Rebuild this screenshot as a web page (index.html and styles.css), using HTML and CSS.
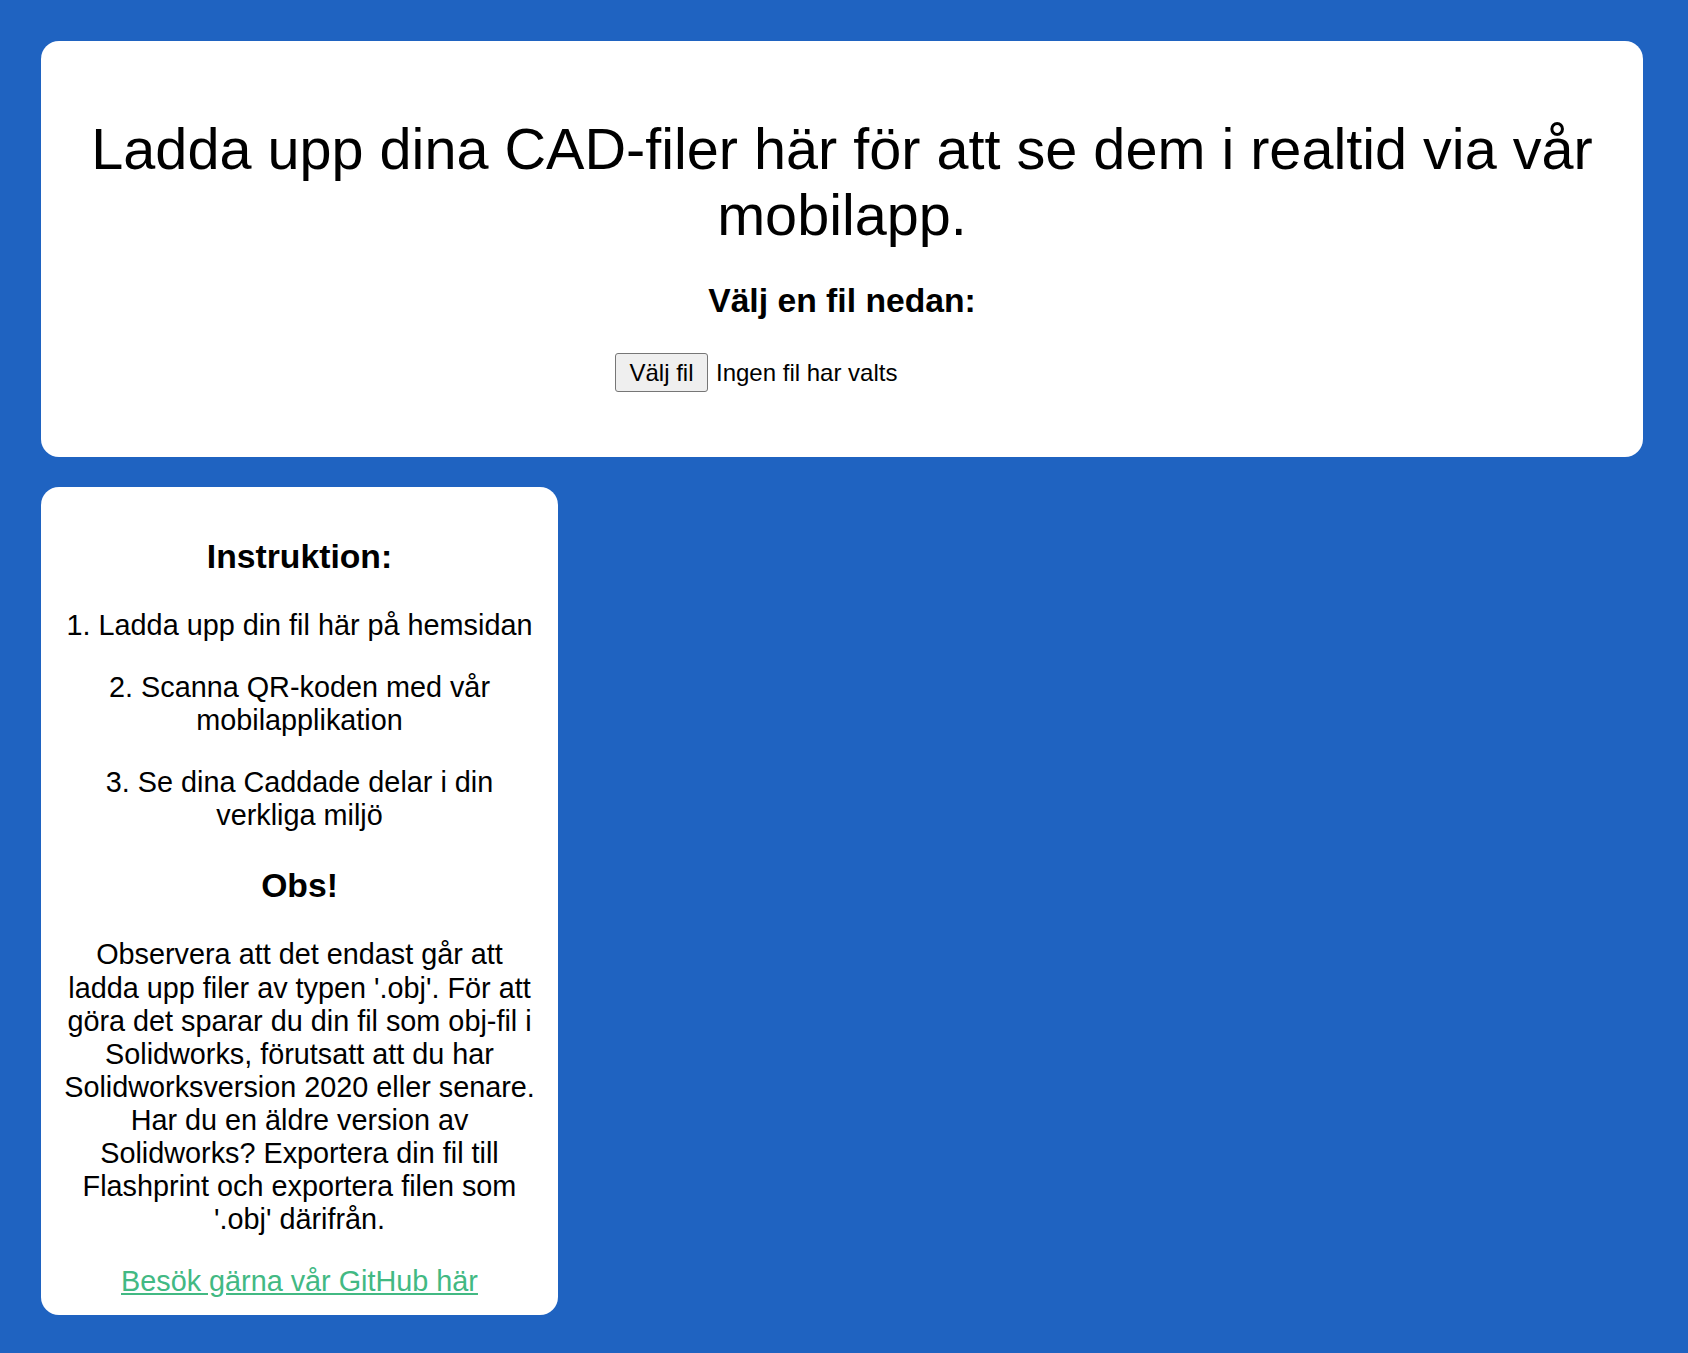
FILE: index.html
```html
<!DOCTYPE html>
<html lang="sv">
<head>
<meta charset="utf-8">
<title>CAD-uppladdning</title>
<link rel="stylesheet" href="styles.css">
</head>
<body>
<div class="page">
  <section class="card upload-card">
    <h1 class="title">Ladda upp dina CAD-filer här för att se dem i realtid via vår mobilapp.</h1>
    <h3 class="subtitle">Välj en fil nedan:</h3>
    <div class="file-row">
      <div class="file-input">
        <span class="file-btn">Välj fil</span>
        <span class="file-label">Ingen fil har valts</span>
      </div>
    </div>
  </section>
  <section class="card info-card">
    <h3 class="info-heading">Instruktion:</h3>
    <p class="info-text">1. Ladda upp din fil här på hemsidan</p>
    <p class="info-text">2. Scanna QR-koden med vår mobilapplikation</p>
    <p class="info-text">3. Se dina Caddade delar i din verkliga miljö</p>
    <h3 class="info-heading">Obs!</h3>
    <p class="info-text">Observera att det endast går att ladda upp filer av typen '.obj'. För att göra det sparar du din fil som obj-fil i Solidworks, förutsatt att du har Solidworksversion 2020 eller senare. Har du en äldre version av Solidworks? Exportera din fil till Flashprint och exportera filen som '.obj' därifrån.</p>
    <p class="info-text info-last"><a class="gh-link" href="#">Besök gärna vår GitHub här</a></p>
  </section>
</div>
</body>
</html>
```

FILE: styles.css
```css
html, body {
  margin: 0;
  padding: 0;
}

body {
  background: #1f63c1;
  font-family: "Liberation Sans", Arial, sans-serif;
  color: #000;
  min-height: 1353px;
}

.page {
  padding: 41px 45px 40px 41px;
  display: flex;
  flex-direction: column;
  align-items: flex-start;
  gap: 30px;
}

.card {
  background: #fff;
  border-radius: 18px;
  text-align: center;
  box-sizing: border-box;
}

.upload-card {
  align-self: stretch;
  padding: 36px;
}

.title {
  font-size: 57.6px;
  font-weight: 400;
  line-height: 66.2px;
  margin: 38.6px 0 33px;
}

.subtitle {
  font-size: 33.7px;
  font-weight: 700;
  line-height: 38.7px;
  margin: 0 0 33.7px;
}

.file-row {
  display: flex;
  justify-content: center;
  margin-bottom: 28.8px;
}

.file-input {
  width: 454px;
  display: flex;
  align-items: center;
  gap: 8px;
  font-size: 24px;
}

.file-btn {
  box-sizing: border-box;
  width: 93px;
  height: 39px;
  display: flex;
  align-items: center;
  justify-content: center;
  background: #efefef;
  border: 1px solid #767676;
  border-radius: 3px;
  color: #000;
}

.file-label {
  white-space: nowrap;
}

.info-card {
  width: 517px;
  padding: 16px 20px 17px;
}

.info-heading {
  font-size: 33.7px;
  font-weight: 700;
  line-height: 38.7px;
  margin: 33.7px 0;
}

.info-text {
  font-size: 28.8px;
  line-height: 33.1px;
  margin: 28.8px 0;
}

.info-last {
  margin-bottom: 0;
}

.gh-link {
  color: #42b983;
  text-decoration: underline;
}
```
